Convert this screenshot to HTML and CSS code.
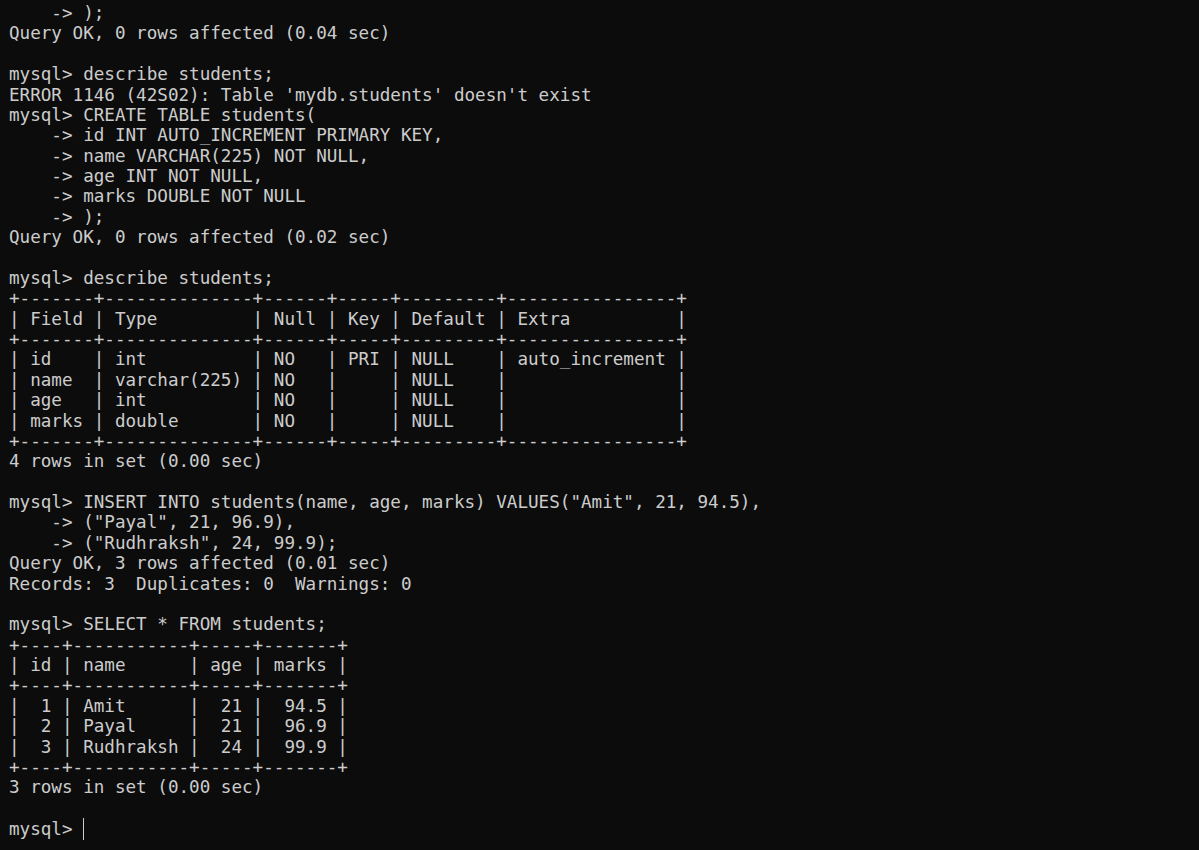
FILE: index.html
```html
<!DOCTYPE html>
<html>
<head>
<meta charset="utf-8">
<link rel="stylesheet" href="styles.css">
</head>
<body>
<pre class="term">    -&gt; );
Query OK, 0 rows affected (0.04 sec)

mysql&gt; describe students;
ERROR 1146 (42S02): Table 'mydb.students' doesn't exist
mysql&gt; CREATE TABLE students(
    -&gt; id INT AUTO_INCREMENT PRIMARY KEY,
    -&gt; name VARCHAR(225) NOT NULL,
    -&gt; age INT NOT NULL,
    -&gt; marks DOUBLE NOT NULL
    -&gt; );
Query OK, 0 rows affected (0.02 sec)

mysql&gt; describe students;
+-------+--------------+------+-----+---------+----------------+
| Field | Type         | Null | Key | Default | Extra          |
+-------+--------------+------+-----+---------+----------------+
| id    | int          | NO   | PRI | NULL    | auto_increment |
| name  | varchar(225) | NO   |     | NULL    |                |
| age   | int          | NO   |     | NULL    |                |
| marks | double       | NO   |     | NULL    |                |
+-------+--------------+------+-----+---------+----------------+
4 rows in set (0.00 sec)

mysql&gt; INSERT INTO students(name, age, marks) VALUES("Amit", 21, 94.5),
    -&gt; ("Payal", 21, 96.9),
    -&gt; ("Rudhraksh", 24, 99.9);
Query OK, 3 rows affected (0.01 sec)
Records: 3  Duplicates: 0  Warnings: 0

mysql&gt; SELECT * FROM students;
+----+-----------+-----+-------+
| id | name      | age | marks |
+----+-----------+-----+-------+
|  1 | Amit      |  21 |  94.5 |
|  2 | Payal     |  21 |  96.9 |
|  3 | Rudhraksh |  24 |  99.9 |
+----+-----------+-----+-------+
3 rows in set (0.00 sec)

mysql&gt; <span class="cursor"></span></pre>
</body>
</html>
```
FILE: styles.css
```css
html, body {
  margin: 0;
  padding: 0;
  background: #0c0c0c;
  height: 100%;
  overflow: hidden;
}
.term {
  margin: 0;
  padding: 3px 0 0 9px;
  font-family: "DejaVu Sans Mono", monospace;
  font-size: 17.6px;
  line-height: 20.375px;
  color: #cccccc;
  white-space: pre;
}
.cursor {
  display: inline-block;
  width: 1px;
  height: 22px;
  background: #cccccc;
  vertical-align: -5px;
}
```
